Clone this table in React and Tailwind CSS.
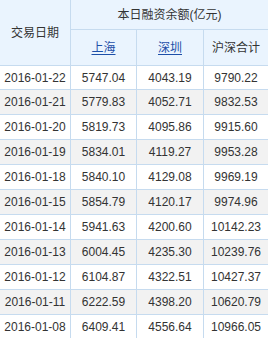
const ROWS = [
  ['2016-01-22', '5747.04', '4043.19', '9790.22'],
  ['2016-01-21', '5779.83', '4052.71', '9832.53'],
  ['2016-01-20', '5819.73', '4095.86', '9915.60'],
  ['2016-01-19', '5834.01', '4119.27', '9953.28'],
  ['2016-01-18', '5840.10', '4129.08', '9969.19'],
  ['2016-01-15', '5854.79', '4120.17', '9974.96'],
  ['2016-01-14', '5941.63', '4200.60', '10142.23'],
  ['2016-01-13', '6004.45', '4235.30', '10239.76'],
  ['2016-01-12', '6104.87', '4322.51', '10427.37'],
  ['2016-01-11', '6222.59', '4398.20', '10620.79'],
  ['2016-01-08', '6409.41', '4556.64', '10966.05'],
]

const cell = 'flex items-center justify-center border-r border-[#c6dbef]'

export default function App() {
  return (
    <div
      className="w-[268px] h-[338px] overflow-hidden bg-white text-[12px] text-[#333]"
      style={{ fontFamily: '"Liberation Sans", "Noto Sans CJK SC", sans-serif' }}
    >
      {/* header */}
      <div className="flex h-[66px] bg-[#eaf4fe] border-b border-[#c6dbef]">
        <div className={`${cell} w-[71px]`}>交易日期</div>
        <div className="flex-1 flex flex-col">
          <div className="h-[30px] flex items-center justify-center border-b border-[#c6dbef]">
            本日融资余额(亿元)
          </div>
          <div className="flex-1 flex">
            <div className={`${cell} w-[66px]`}>
              <a className="text-[#1d4fa8] underline underline-offset-2">上海</a>
            </div>
            <div className={`${cell} w-[67px]`}>
              <a className="text-[#1d4fa8] underline underline-offset-2">深圳</a>
            </div>
            <div className="flex-1 flex items-center justify-center">沪深合计</div>
          </div>
        </div>
      </div>

      {/* rows */}
      {ROWS.map((r, i) => (
        <div
          key={r[0]}
          className={`flex border-b border-[#c6dbef] ${i === 0 ? 'h-[24px]' : 'h-[25px]'} ${i % 2 ? 'bg-[#f2f2f2]' : 'bg-white'}`}
        >
          <div className={`${cell} w-[71px]`}>{r[0]}</div>
          <div className={`${cell} w-[66px]`}>{r[1]}</div>
          <div className={`${cell} w-[67px]`}>{r[2]}</div>
          <div className="flex-1 flex items-center justify-center">{r[3]}</div>
        </div>
      ))}
    </div>
  )
}
